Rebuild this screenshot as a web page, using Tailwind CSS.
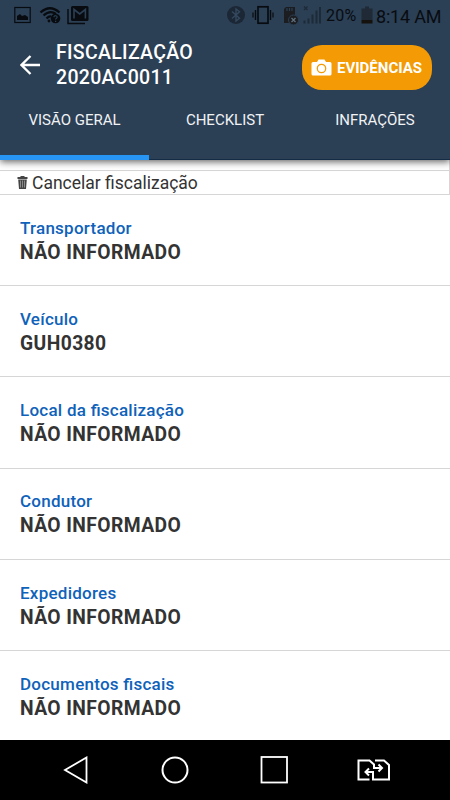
<!DOCTYPE html>
<html lang="pt-BR">
<head>
    <meta charset="UTF-8">
    <meta name="viewport" content="width=device-width, initial-scale=1.0">
    <title>Fiscalização 2020AC0011</title>
    <!-- Tailwind CSS via CDN -->
    <script src="https://cdn.jsdelivr.net/npm/@tailwindcss/browser@4"></script>
</head>
<body class="bg-white font-[Roboto,sans-serif] h-screen flex flex-col overflow-hidden">

<!-- Cabeçalho -->
<header class="relative z-10 h-40 shrink-0 bg-[#2b3f55] text-white shadow-[0_2px_7px_rgba(0,0,0,0.6)] flex flex-col">

    <!-- Barra de status -->
    <div class="h-8 shrink-0 flex items-center text-[#080c10] pl-3.5 whitespace-nowrap">
        <svg class="w-[17px] h-8" viewBox="0 0 17 32">
            <rect x="0.8" y="7.5" width="15.4" height="15" fill="none" stroke="currentColor" stroke-width="1.2"/>
            <path d="M3 20v-4l3-2 2 2 3-1 3 2v3z" fill="currentColor"/>
        </svg>
        <svg class="w-[22px] h-8 ml-2" viewBox="0 0 22 32" fill="none" stroke="currentColor">
            <path d="M1.5 12.5Q11 4 20.500 12.500M4.500 15.500Q11 9.500 17 14M7.500 18.500Q10 16 12 16.500" stroke-width="2.300"/>
            <circle cx="10" cy="21" r="1.400" fill="currentColor" stroke="none"/>
            <circle cx="16.500" cy="18.500" r="4.800" fill="currentColor" stroke="none"/>
            <path d="M14.900 17.300c0-2.200 3.300-2 3.200 0 0 1-1.500 1.200-1.500 2.200M16.600 20.700v1.200" stroke="#2b3f55" stroke-width="1.200"/>
        </svg>
        <svg class="w-[22px] h-8 ml-1.5" viewBox="0 0 22 32">
            <path d="M1 9v14.500h17" fill="none" stroke="currentColor" stroke-width="1.500"/>
            <rect x="4" y="6" width="17.500" height="15" rx="1.500" fill="currentColor"/>
            <path d="M7 18.500V9.500l5.700 4.500 5.700-4.500v9" fill="none" stroke="#2b3f55" stroke-width="1.600"/>
        </svg>

        <svg class="w-[18px] h-8 ml-[138px]" viewBox="0 0 18 32">
            <circle cx="9" cy="15" r="9" fill="#1b2735"/>
            <path d="M5 11.500l7.500 6.800L9 21V9l3.500 2.700L5 18.500" fill="none" stroke="#34485e" stroke-width="1.400"/>
        </svg>
        <svg class="w-[22px] h-8 ml-[7px]" viewBox="0 0 22 32" fill="none" stroke="currentColor">
            <rect x="6" y="6.800" width="10" height="16.400" stroke-width="1.700"/>
            <path d="M3.500 10v10M18.500 10v10" stroke-width="1.400"/>
            <path d="M1 12.500v5M21 12.500v5" stroke-width="1.200"/>
        </svg>
        <svg class="w-4 h-8 ml-[9px]" viewBox="0 0 16 32">
            <path d="M1 9l2-2h9v16H1z" fill="#1b1d20"/>
            <path d="M4 8v3M6.500 8v3M9 8v3" stroke="#2b3f55" stroke-width="1.200"/>
            <circle cx="10.500" cy="20" r="5" fill="#1b1d20" stroke="#2b3f55"/>
            <path d="M8.500 18l4 4M12.500 18l-4 4" stroke="#5f6e7e" stroke-width="1.300"/>
        </svg>
        <svg class="w-[19px] h-8 ml-1" viewBox="0 0 19 32" fill="none" stroke="#1d2a38">
            <path d="M1 6.500l3.500 3.500M4.500 6.500L1 10" stroke-width="1.200"/>
            <path d="M1.500 23.500v-3M5.500 23.500v-5M9.500 23.500v-9M13.500 23.500v-13M17 23.500v-16.500" stroke-width="2"/>
        </svg>
        <span class="ml-1 w-[32px] text-base tracking-[0.2px]">20%</span>
        <svg class="w-3 h-8 ml-[3px]" viewBox="0 0 12 32">
            <path d="M4 6.500h4v2h3.500V20H0.500V8.500H4z" fill="#1f2a36"/>
            <path d="M0.500 20h11v3.500H0.500z" fill="#15110d"/>
        </svg>
        <span class="ml-[3px] text-[18px] tracking-[-0.2px]">8:14 AM</span>
    </div>

    <!-- Título e botão -->
    <div class="h-16 shrink-0 flex items-center pl-5 pr-[18px]">
        <svg class="w-5 h-5 mt-0.5" viewBox="0 0 20 20" fill="none" stroke="currentColor" stroke-width="2.300">
            <path d="M20 10H2M10.500 1L1.500 10l9 9"/>
        </svg>
        <h1 class="ml-4 mt-px flex-1 text-[19.500px] tracking-[0.3px] leading-[25px] font-medium">
            FISCALIZAÇÃO<br>2020AC0011
        </h1>
        <button class="w-[130px] h-[45px] mt-[7px] rounded-[20px] bg-[#f39a04] flex items-center pl-[9px] text-[15px] font-bold whitespace-nowrap">
            <svg class="w-[21px] h-[18px] mr-[5px] shrink-0" viewBox="0 0 21 18">
                <path d="M2 3h4l1.500-2.500h6L15 3h4q1.500 0 1.500 1.500v10.500q0 1.500-1.500 1.500H2Q.5 16.500.5 15V4.500Q.5 3 2 3z" fill="currentColor"/>
                <circle cx="10.500" cy="9.500" r="4.200" fill="none" stroke="#f39a04" stroke-width="1.300"/>
            </svg>
            <span class="pt-0.5">EVIDÊNCIAS</span>
        </button>
    </div>

    <!-- Abas -->
    <nav class="flex-1 grid grid-cols-[149px_152px_149px] text-[15px] text-center leading-[49px] whitespace-nowrap">
        <a href="#" class="border-b-5 border-[#2695f3] text-[#f0f2f4]">VISÃO GERAL</a>
        <a href="#" class="border-b border-[#142c46] text-[#f0f2f4]">CHECKLIST</a>
        <a href="#" class="border-b border-[#142c46] text-[#f0f2f4] pr-px">INFRAÇÕES</a>
    </nav>
</header>

<!-- Conteúdo -->
<main class="flex-1 min-h-0 overflow-hidden text-[#333]">
    <div class="h-[35px] pt-2.5 border-r border-[#d6d6d6]">
        <button class="w-full h-[25px] border-y border-[#d6d6d6] flex items-center pl-[17px] text-[17.500px] whitespace-nowrap">
            <svg class="w-[11px] h-[13px] mr-1" viewBox="0 0 11 13">
                <path d="M3.500 0h4v1H10.500v2H.5V1h3zM1.200 3.500h8.600L9 13H2z" fill="#444"/>
                <path d="M3.500 4.500v7M5.500 4.500v7M7.500 4.500v7" stroke="#aaa" stroke-width=".7"/>
            </svg>
            <span class="pt-px">Cancelar fiscalização</span>
        </button>
    </div>

    <div class="h-[91px] pt-[21px] pl-5 border-b border-[#d6d6d6]">
        <p class="text-[17px] tracking-[0.25px] [font-feature-settings:'liga'] leading-6 text-[#0f62ba] font-medium">Transportador</p>
        <p class="text-[19.300px] tracking-[0.400px] leading-[25px] font-bold">NÃO INFORMADO</p>
    </div>
    <div class="h-[91px] pt-[21px] pl-5 border-b border-[#d6d6d6]">
        <p class="text-[17px] tracking-[0.25px] [font-feature-settings:'liga'] leading-6 text-[#0f62ba] font-medium">Veículo</p>
        <p class="text-[19.300px] tracking-[0.400px] leading-[25px] font-bold">GUH0380</p>
    </div>
    <div class="h-[91.500px] pt-[21px] pl-5 border-b border-[#d6d6d6]">
        <p class="text-[17px] tracking-[0.25px] [font-feature-settings:'liga'] leading-6 text-[#0f62ba] font-medium">Local da fiscalização</p>
        <p class="text-[19.300px] tracking-[0.400px] leading-[25px] font-bold">NÃO INFORMADO</p>
    </div>
    <div class="h-[91px] pt-5 pl-5 border-b border-[#d6d6d6]">
        <p class="text-[17px] tracking-[0.25px] [font-feature-settings:'liga'] leading-6 text-[#0f62ba] font-medium">Condutor</p>
        <p class="text-[19.300px] tracking-[0.400px] leading-[25px] font-bold">NÃO INFORMADO</p>
    </div>
    <div class="h-[91.500px] pt-[21px] pl-5 border-b border-[#d6d6d6]">
        <p class="text-[17px] tracking-[0.25px] [font-feature-settings:'liga'] leading-6 text-[#0f62ba] font-medium">Expedidores</p>
        <p class="text-[19.300px] tracking-[0.400px] leading-[25px] font-bold">NÃO INFORMADO</p>
    </div>
    <div class="h-[91px] pt-[21px] pl-5">
        <p class="text-[17px] tracking-[0.25px] [font-feature-settings:'liga'] leading-6 text-[#0f62ba] font-medium">Documentos fiscais</p>
        <p class="text-[19.300px] tracking-[0.400px] leading-[25px] font-bold">NÃO INFORMADO</p>
    </div>
</main>

<!-- Barra de navegação do Android -->
<footer class="h-[60px] shrink-0 bg-black text-white flex items-center pl-[62px]">
    <svg class="w-7 h-7" viewBox="0 0 28 28" fill="none" stroke="currentColor" stroke-width="1.800">
        <path d="M24.500 1.500v25L3 14z"/>
    </svg>
    <svg class="w-7 h-7 ml-[71px]" viewBox="0 0 28 28" fill="none" stroke="currentColor" stroke-width="2">
        <circle cx="14" cy="14" r="12.500"/>
    </svg>
    <svg class="w-7 h-7 ml-[71px]" viewBox="0 0 28 28" fill="none" stroke="currentColor" stroke-width="1.800">
        <rect x="1.500" y="1" width="25.500" height="25.500"/>
    </svg>
    <svg class="w-[34px] h-[22px] ml-[69px]" viewBox="0 0 34 22" fill="none" stroke="currentColor" stroke-width="2">
        <path d="M12.500 20.500H1.500V1.500h11l4.500 4V9h8M21.500 5.500L25 9l-3.500 3.500"/>
        <path d="M18 1.500h9L32 6v14.500H16v-7.500H8.500M12 9.500L8.500 13l3.500 3.500"/>
    </svg>
</footer>
</body>
</html>
